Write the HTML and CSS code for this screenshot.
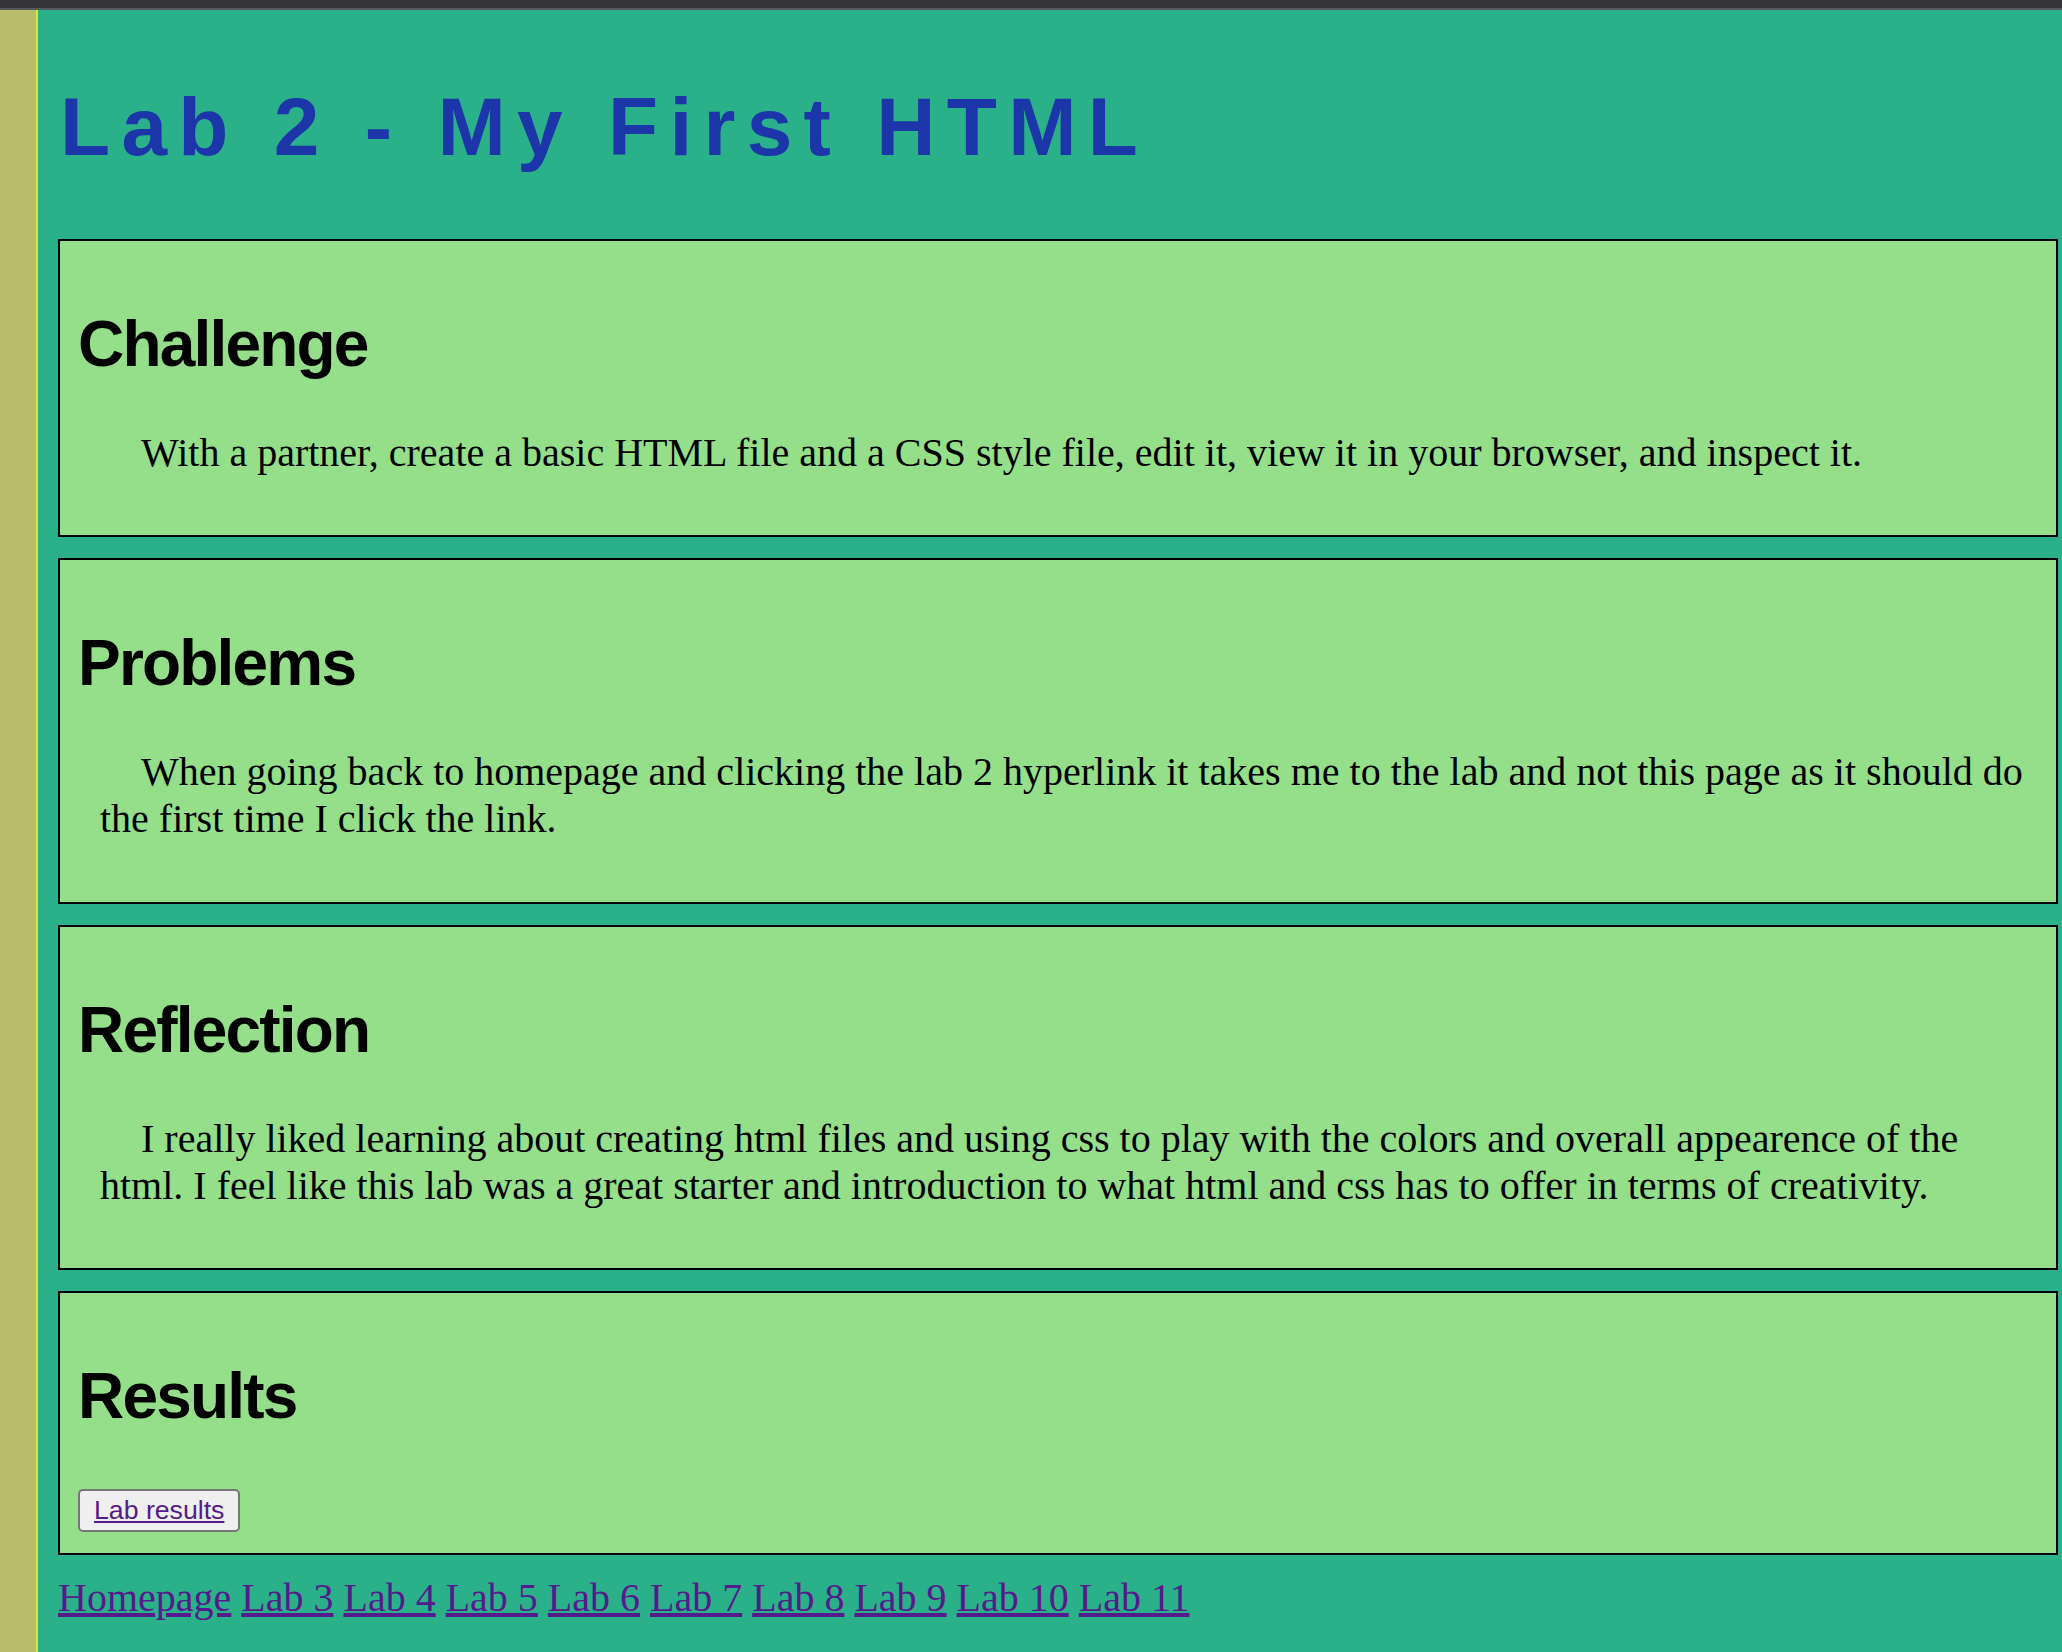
FILE: index.html
```html
<!DOCTYPE html>
<html lang="en">
<head>
<meta charset="utf-8">
<title>Lab 2 - My First HTML</title>
<link rel="stylesheet" href="styles.css">
</head>
<body>
<div class="topbar"></div>
<div class="page">
  <aside class="rail"></aside>
  <main class="content">
    <h1 class="title">Lab 2 - My First HTML</h1>

    <section class="card">
      <h2 class="card-title">Challenge</h2>
      <p class="card-text">With a partner, create a basic HTML file and a CSS style file, edit it, view it in your browser, and inspect it.</p>
    </section>

    <section class="card">
      <h2 class="card-title">Problems</h2>
      <p class="card-text">When going back to homepage and clicking the lab 2 hyperlink it takes me to the lab and not this page as it should do the first time I click the link.</p>
    </section>

    <section class="card">
      <h2 class="card-title">Reflection</h2>
      <p class="card-text">I really liked learning about creating html files and using css to play with the colors and overall appearence of the html. I feel like this lab was a great starter and introduction to what html and css has to offer in terms of creativity.</p>
    </section>

    <section class="card">
      <h2 class="card-title">Results</h2>
      <div class="actions">
        <button class="btn" type="button"><a class="link" href="#">Lab results</a></button>
      </div>
    </section>

    <nav class="links">
      <a class="link" href="#">Homepage</a> <a class="link" href="#">Lab 3</a> <a class="link" href="#">Lab 4</a> <a class="link" href="#">Lab 5</a> <a class="link" href="#">Lab 6</a> <a class="link" href="#">Lab 7</a> <a class="link" href="#">Lab 8</a> <a class="link" href="#">Lab 9</a> <a class="link" href="#">Lab 10</a> <a class="link" href="#">Lab 11</a>
    </nav>
  </main>
</div>
</body>
</html>
```

FILE: styles.css
```css
html, body {
  margin: 0;
  padding: 0;
  background: #2ab18a;
}

body {
  font-family: "Liberation Serif", "Times New Roman", serif;
  color: #000;
}

.topbar {
  height: 8px;
  background: #353539;
  border-bottom: 2px solid #55595c;
}

.page {
  display: flex;
  min-height: 1642px;
}

.rail {
  flex: 0 0 36px;
  background: #b9bc68;
  border-right: 2px solid #d6ea3c;
}

.content {
  flex: 1 1 auto;
  min-width: 0;
  padding: 0 4px 0 20px;
  display: flex;
  flex-direction: column;
}

.title {
  margin: 70.6px 0 0 2px;
  font-family: "Liberation Sans", Arial, Helvetica, sans-serif;
  font-weight: bold;
  font-size: 82px;
  line-height: 92px;
  letter-spacing: 11.3px;
  color: #1c35a8;
  white-space: nowrap;
}

.card {
  margin-top: 66.4px;
  background: #95df8b;
  border: 2px solid #000;
  padding: 0 18px;
}

.card + .card {
  margin-top: 21px;
}

.card-title {
  margin: 66px 0 0 0;
  font-family: "Liberation Sans", Arial, Helvetica, sans-serif;
  font-weight: bold;
  font-size: 64px;
  line-height: 74px;
  letter-spacing: -1.8px;
}

.card-text {
  margin: 48px 0 59.5px 22px;
  font-size: 40px;
  line-height: 47px;
  text-indent: 41px;
}

.actions {
  display: flex;
  margin: 56px 0 21px 0;
}

.btn {
  font-family: "Liberation Sans", Arial, Helvetica, sans-serif;
  font-size: 26.67px;
  line-height: 31px;
  padding: 4px 14px;
  background: #efefef;
  border: 2px solid #767676;
  border-radius: 5px;
  margin: 0;
}

.link {
  color: #551a8b;
  text-decoration: underline;
}

.links {
  margin-top: 20px;
  font-size: 40px;
  line-height: 46px;
}
```
